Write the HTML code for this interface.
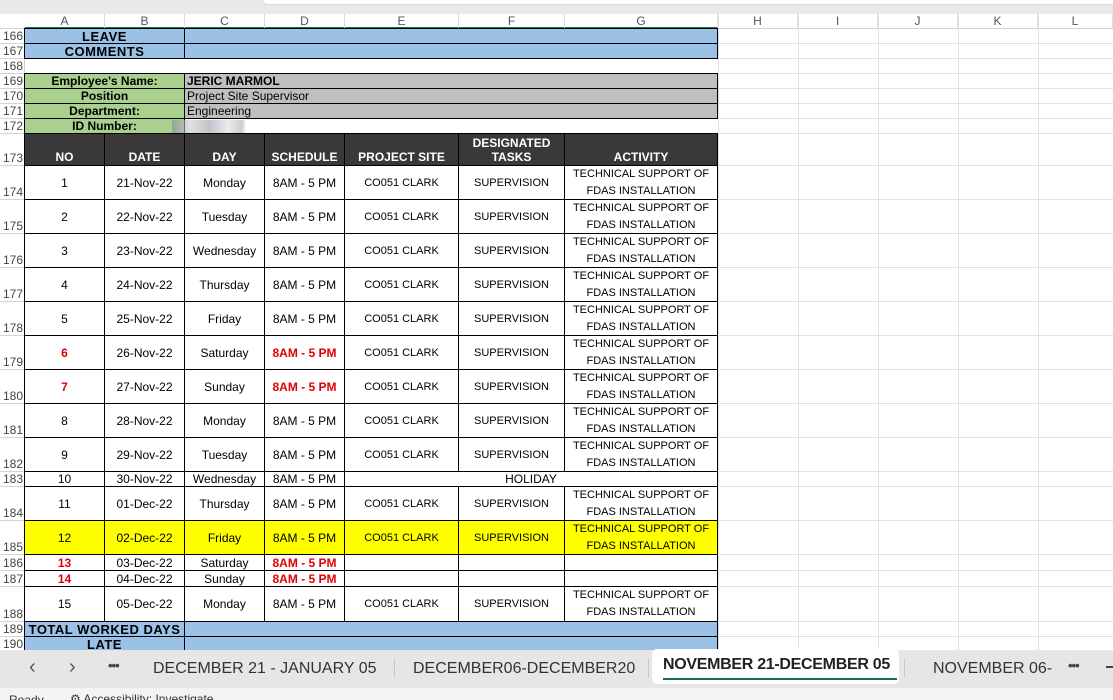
<!DOCTYPE html>
<html><head><meta charset="utf-8"><style>
*{margin:0;padding:0;box-sizing:border-box}
body{width:1113px;height:700px;overflow:hidden;background:#fff;font-family:"Liberation Sans",Arial,sans-serif;position:relative}
.a{position:absolute}
.c{position:absolute;display:flex;align-items:center;justify-content:center;text-align:center;font-size:12px;color:#000;white-space:nowrap;overflow:hidden}
.b{border:1px solid #000;margin:-1px 0 0 -1px}
.rh{position:absolute;left:0;width:25px;font-size:12px;color:#444;text-align:right;padding-right:2px;display:flex;align-items:flex-end;justify-content:flex-end;border-bottom:1px solid #d4d4d4;background:#fff}
.vl{position:absolute;top:14px;width:1px;height:636px;background:#e1e1e1}
.hl{position:absolute;left:718px;width:395px;height:1px;background:#e1e1e1}
.act{font-size:11px;line-height:17px;white-space:normal;flex-direction:column}
.red{color:#e00000;font-weight:bold}
.hd{background:#3a3838;color:#fff;font-weight:bold;align-items:flex-end;padding-bottom:1px;line-height:14px;white-space:normal}
.sm{font-size:11px}
</style></head><body>
<div class="a" style="left:0;top:0;width:1113px;height:14px;background:#e9e9e9"></div>
<div class="a" style="left:262px;top:-6px;width:860px;height:11px;background:#fff;border-radius:6px;border:1px solid #d8d8d8"></div>
<div class="a" style="left:0;top:14px;width:1113px;height:15px;background:#fff;border-bottom:1px solid #d4d4d4"></div>
<div class="a" style="left:25px;top:27px;width:693px;height:2px;background:#1e7145"></div>
<div id="colh"></div>
<div class="vl" style="left:798px"></div><div class="vl" style="left:878px"></div><div class="vl" style="left:958px"></div><div class="vl" style="left:1038px"></div><div class="vl" style="left:718px"></div>
<div id="g"></div>
<script>
var cols=[25,105,185,265,345,459,565,718,798,878,958,1038,1113];
var L="ABCDEFGHIJKL",h="";
for(var i=0;i<12;i++){h+='<div class="c" style="left:'+cols[i]+'px;top:14px;width:'+(cols[i+1]-cols[i])+'px;height:14px;color:#555;font-size:12px;border-right:1px solid #ddd">'+L[i]+'</div>';}
document.getElementById('colh').innerHTML=h;
var rows=[[166,29,44],[167,44,59],[168,59,74],[169,74,89],[170,89,104],[171,104,119],[172,119,134],[173,134,166]];
var y=166;for(var r=174;r<=182;r++){rows.push([r,y,y+34]);y+=34;}
rows.push([183,472,487],[184,487,521],[185,521,555],[186,555,571],[187,571,587],[188,587,622],[189,622,637],[190,637,652]);
var g="";
rows.forEach(function(R){g+='<div class="rh" style="top:'+R[1]+'px;height:'+(R[2]-R[1])+'px">'+R[0]+'</div>';
 g+='<div class="hl" style="top:'+(R[2]-1)+'px"></div>';});
g+='<div class="a" style="left:24px;top:29px;width:1px;height:621px;background:#d4d4d4"></div>';
function cell(c1,c2,y1,y2,txt,st,cls){g+='<div class="c b '+(cls||'')+'" style="left:'+cols[c1]+'px;top:'+y1+'px;width:'+(cols[c2]-cols[c1]+1)+'px;height:'+(y2-y1+1)+'px;'+(st||'')+'">'+txt+'</div>';}
var blue='background:#9bc2e6;';
cell(0,2,29,44,'LEAVE',blue+'font-weight:bold;font-size:13px;letter-spacing:.5px');
cell(2,7,29,44,'',blue);
cell(0,2,44,59,'COMMENTS',blue+'font-weight:bold;font-size:13px;letter-spacing:.5px');
cell(2,7,44,59,'',blue);
var grn='background:#a9d08e;font-weight:bold;';var gry='background:#bfbfbf;justify-content:flex-start;padding-left:2px;';
cell(0,2,74,89,"Employee's Name:",grn);cell(2,7,74,89,'JERIC MARMOL',gry+'font-weight:bold');
cell(0,2,89,104,'Position',grn);cell(2,7,89,104,'Project Site Supervisor',gry);
cell(0,2,104,119,'Department:',grn);cell(2,7,104,119,'Engineering',gry);
cell(0,2,119,134,'ID Number:',grn);
g+='<div class="a" style="left:172px;top:120px;width:93px;height:13px;background:linear-gradient(90deg,#889 0,#ccc 20%,#99a 40%,#ddd 60%,#aab 75%,#fff 80%);opacity:.6"></div>';
var H=['NO','DATE','DAY','SCHEDULE','PROJECT SITE','DESIGNATED<br>TASKS','ACTIVITY'];
for(var i=0;i<7;i++)cell(i,i+1,134,166,H[i],'','hd');
var data=[['1','21-Nov-22','Monday',0],['2','22-Nov-22','Tuesday',0],['3','23-Nov-22','Wednesday',0],['4','24-Nov-22','Thursday',0],['5','25-Nov-22','Friday',0],['6','26-Nov-22','Saturday',1],['7','27-Nov-22','Sunday',1],['8','28-Nov-22','Monday',0],['9','29-Nov-22','Tuesday',0]];
var act='TECHNICAL SUPPORT OF<br>FDAS INSTALLATION';
function full(n,d,day,red,y1,y2,bg){var st=bg||'';
 cell(0,1,y1,y2,n,st,red?'red':'');cell(1,2,y1,y2,d,st);cell(2,3,y1,y2,day,st);
 cell(3,4,y1,y2,'8AM - 5 PM',st,red?'red':'');cell(4,5,y1,y2,'CO051 CLARK',st,'sm');cell(5,6,y1,y2,'SUPERVISION',st,'sm');cell(6,7,y1,y2,act,st,'act');}
y=166;data.forEach(function(d){full(d[0],d[1],d[2],d[3],y,y+34);y+=34;});
cell(0,1,472,487,'10');cell(1,2,472,487,'30-Nov-22');cell(2,3,472,487,'Wednesday');cell(3,4,472,487,'8AM - 5 PM');cell(4,7,472,487,'HOLIDAY');
full('11','01-Dec-22','Thursday',0,487,521);
full('12','02-Dec-22','Friday',0,521,555,'background:#ffff00;');
function part(n,d,day,y1,y2){cell(0,1,y1,y2,n,'','red');cell(1,2,y1,y2,d);cell(2,3,y1,y2,day);cell(3,4,y1,y2,'8AM - 5 PM','','red');cell(4,5,y1,y2,'');cell(5,6,y1,y2,'');cell(6,7,y1,y2,'');}
part('13','03-Dec-22','Saturday',555,571);part('14','04-Dec-22','Sunday',571,587);
full('15','05-Dec-22','Monday',0,587,622);
cell(0,2,622,637,'TOTAL WORKED DAYS',blue+'font-weight:bold;font-size:13px;letter-spacing:.5px');cell(2,7,622,637,'',blue);
cell(0,2,637,655,'LATE',blue+'font-weight:bold;font-size:13px;letter-spacing:.5px;align-items:flex-start');cell(2,7,637,655,'',blue);
document.getElementById('g').innerHTML=g;
</script>
<div class="a" style="left:0;top:650px;width:1113px;height:38px;background:#e6e6e6"></div>
<div class="a" style="left:29px;top:656px;font-size:20px;color:#555">&#8249;</div>
<div class="a" style="left:69px;top:656px;font-size:20px;color:#555">&#8250;</div>
<div class="a" style="left:108px;top:658px;font-size:13px;color:#444;letter-spacing:-1px;font-weight:bold">•••</div>
<div class="a" style="left:153px;top:660px;font-size:16px;color:#333">DECEMBER 21 - JANUARY 05</div>
<div class="a" style="left:394px;top:658px;width:1px;height:20px;background:#c8c8c8"></div>
<div class="a" style="left:413px;top:660px;font-size:16px;color:#333">DECEMBER06-DECEMBER20</div>
<div class="a" style="left:648px;top:658px;width:1px;height:20px;background:#c8c8c8"></div>
<div class="a" style="left:652px;top:649px;width:247px;height:35px;background:#fff;border-radius:5px"></div>
<div class="a" style="left:663px;top:656px;font-size:16px;color:#222;font-weight:bold;letter-spacing:-.3px">NOVEMBER 21-DECEMBER 05</div>
<div class="a" style="left:663px;top:678px;width:234px;height:2px;background:#1e7145"></div>
<div class="a" style="left:904px;top:658px;width:1px;height:20px;background:#c8c8c8"></div>
<div class="a" style="left:933px;top:660px;font-size:16px;color:#333">NOVEMBER 06-</div>
<div class="a" style="left:1068px;top:658px;font-size:13px;color:#444;letter-spacing:-1px;font-weight:bold">•••</div>
<div class="a" style="left:1106px;top:666px;width:7px;height:2px;background:#444"></div>
<div class="a" style="left:0;top:688px;width:1113px;height:12px;background:#f3f3f3;overflow:hidden">
<div class="a" style="left:9px;top:5px;font-size:12px;color:#333">Ready</div>
<div class="a" style="left:70px;top:4px;font-size:12px;color:#333">&#9881; Accessibility: Investigate</div></div>
</body></html>
